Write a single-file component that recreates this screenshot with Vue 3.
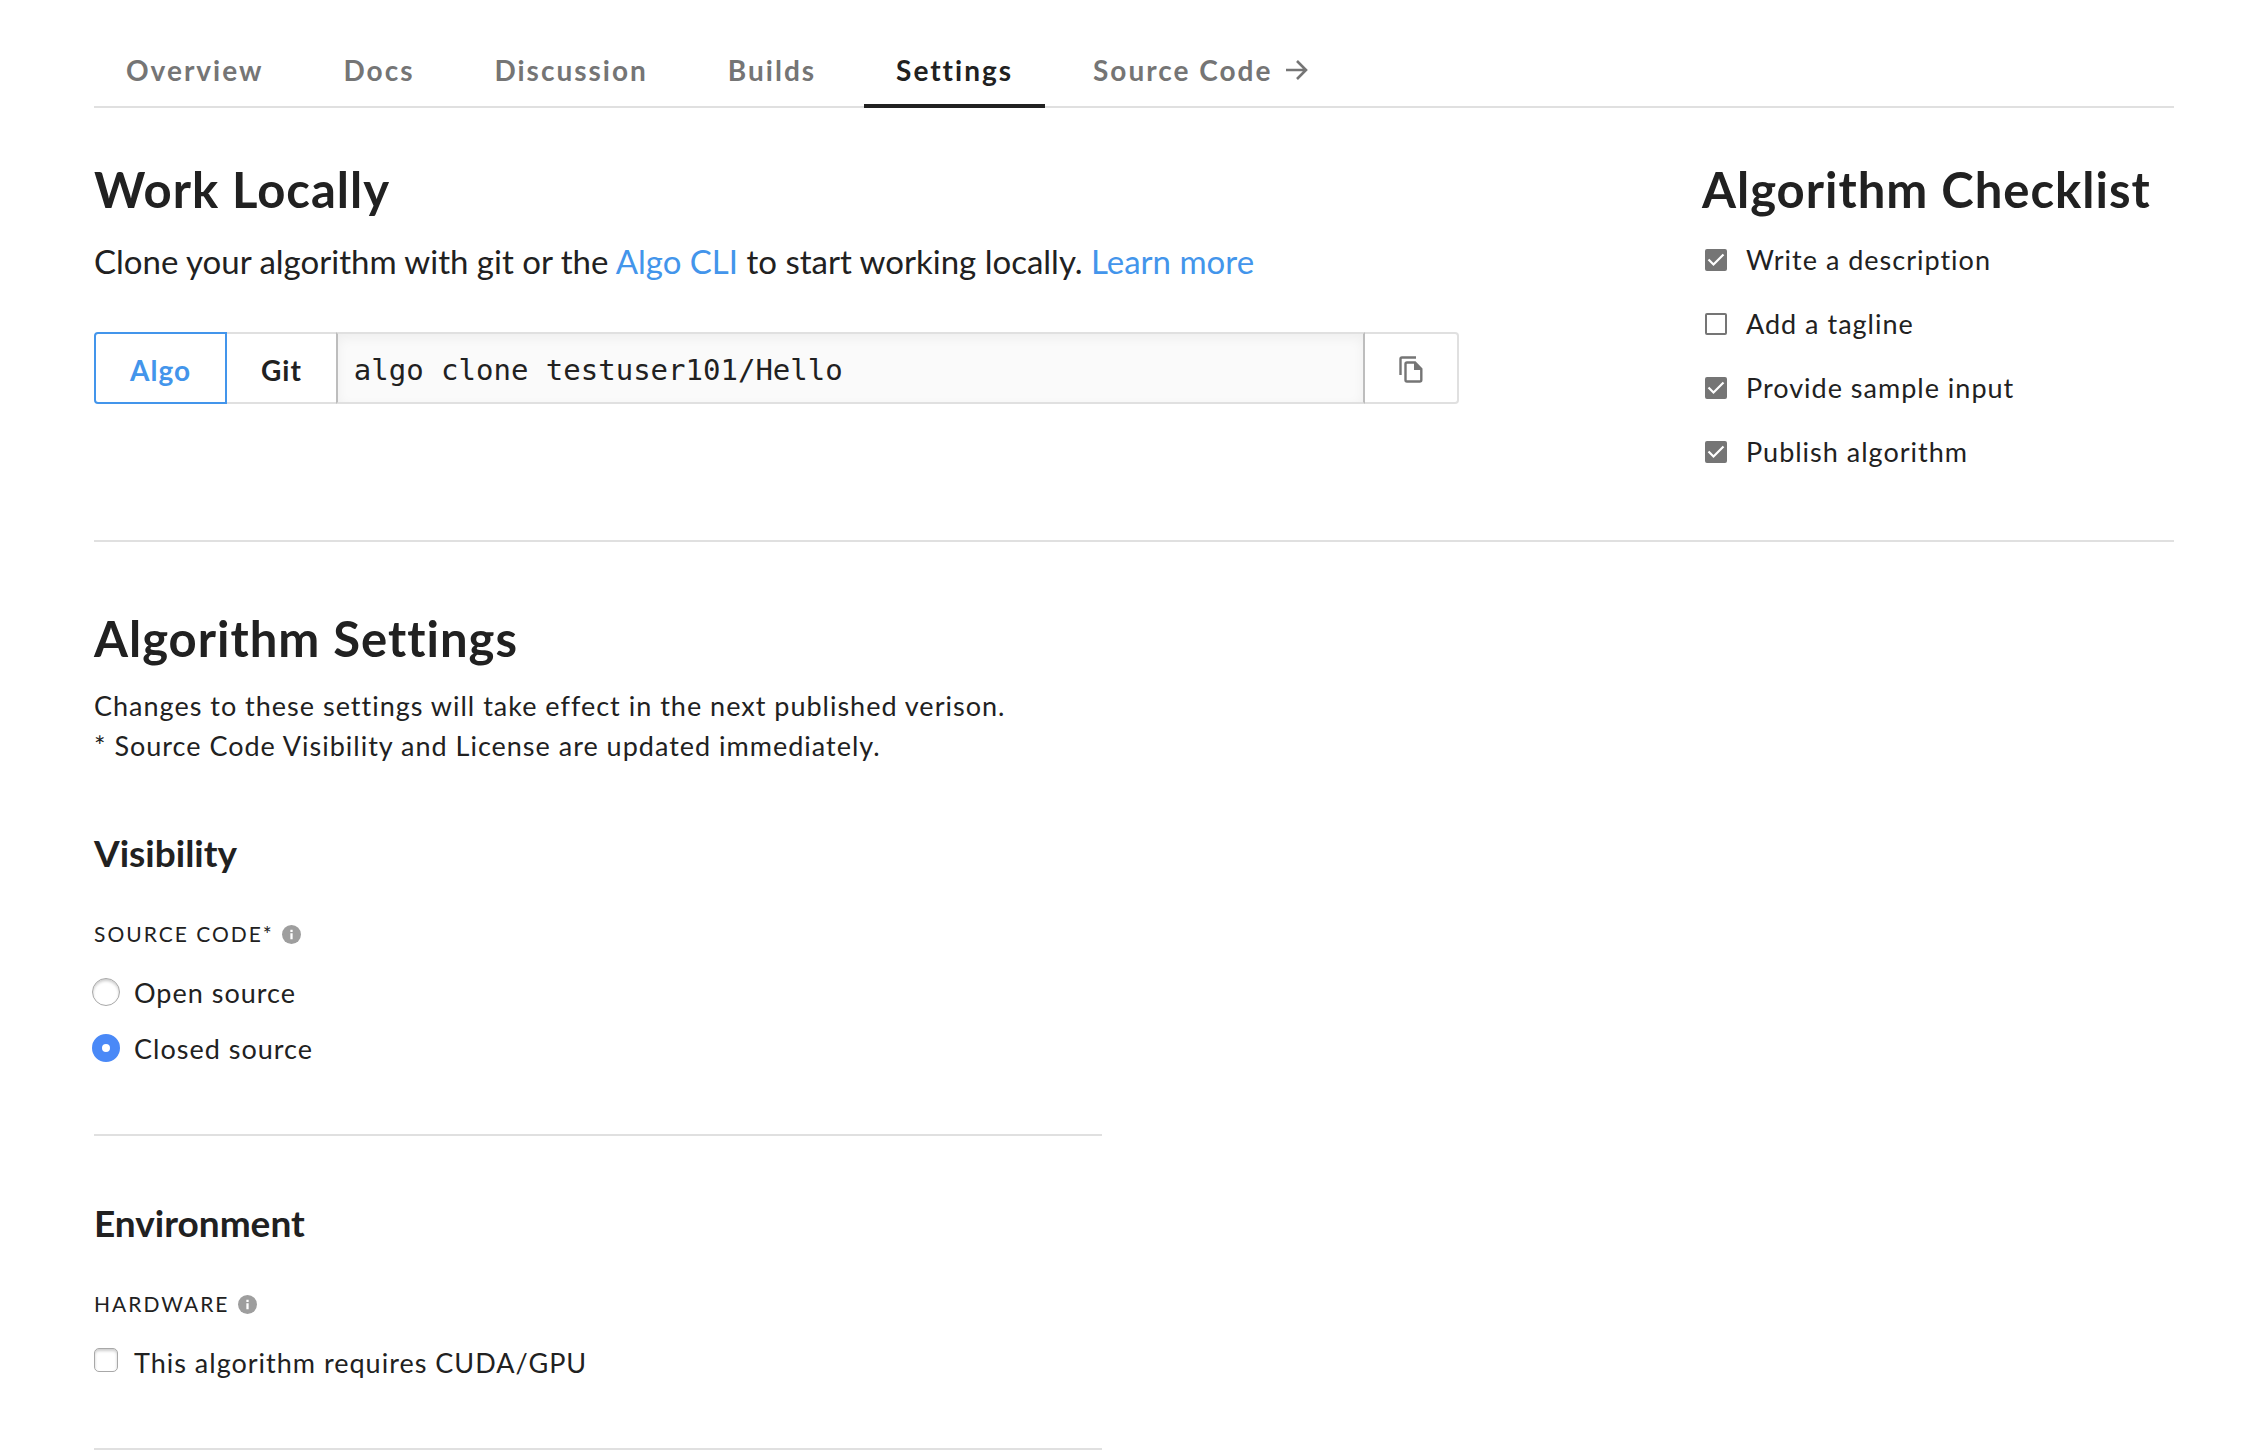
<script setup>
import { ref } from 'vue'

const tabs = ['Overview', 'Docs', 'Discussion', 'Builds', 'Settings']
const activeTab = ref('Settings')

const commands = {
  Algo: 'algo clone testuser101/Hello',
  Git: 'git clone https://git.algorithmia.com/git/testuser101/Hello.git',
}
const tool = ref('Algo')

const checklist = ref([
  { id: 'description', label: 'Write a description', done: true },
  { id: 'tagline', label: 'Add a tagline', done: false },
  { id: 'sample', label: 'Provide sample input', done: true },
  { id: 'publish', label: 'Publish algorithm', done: true },
])

const source = ref('closed')
const gpu = ref(false)
</script>

<template>
  <div class="page">
    <nav class="tabs">
      <a
        v-for="tab in tabs"
        :key="tab"
        href="#"
        class="tab"
        :class="{ active: tab === activeTab }"
        @click.prevent="activeTab = tab"
      >{{ tab }}</a>
      <a href="#" class="tab">
        Source Code
        <svg class="arrow" viewBox="0 0 22 22" aria-hidden="true">
          <path d="M0 11H20M11 2L20 11L11 20" fill="none" stroke="currentColor" stroke-width="2.6" />
        </svg>
      </a>
    </nav>

    <div class="grid intro">
      <section class="local">
        <h2>Work Locally</h2>
        <p class="lead">
          Clone your algorithm with git or the <a href="#">Algo CLI</a> to start working locally.
          <a href="#">Learn more</a>
        </p>
        <div class="clone">
          <button
            v-for="(cmd, name) in commands"
            :key="name"
            type="button"
            class="tool"
            :class="{ selected: tool === name }"
            @click="tool = name"
          >{{ name }}</button>
          <input class="command" type="text" readonly aria-label="Clone command" :value="commands[tool]" />
          <button type="button" class="copy" aria-label="Copy">
            <svg viewBox="0 0 24 28" aria-hidden="true">
              <path d="M1.500 19V3Q1.500 1.500 3 1.500H17" fill="none" stroke="currentColor" stroke-width="2.400" />
              <path d="M8 6.500H16L22.300 13V24Q22.300 25.500 20.800 25.500H8Q6.500 25.500 6.500 24V8Q6.500 6.500 8 6.500Z" fill="none" stroke="currentColor" stroke-width="2.400" />
              <path d="M15 6V14H23Z" fill="currentColor" />
            </svg>
          </button>
        </div>
      </section>

      <section class="checklist">
        <h2>Algorithm Checklist</h2>
        <ul>
          <li v-for="item in checklist" :key="item.id">
            <label class="check-row" :for="item.id">
              <span class="tick">
                <input :id="item.id" v-model="item.done" type="checkbox" />
                <svg v-if="item.done" viewBox="0 0 22 22" aria-hidden="true">
                  <path d="M3.500 10.500L8.500 15.500L18.500 5.500" fill="none" stroke="#fff" stroke-width="2.200" />
                </svg>
              </span>
              {{ item.label }}
            </label>
          </li>
        </ul>
      </section>
    </div>

    <div class="grid">
      <form class="settings" @submit.prevent>
        <h2>Algorithm Settings</h2>
        <p class="note">
          Changes to these settings will take effect in the next published verison.<br />
          * Source Code Visibility and License are updated immediately.
        </p>

        <section class="group">
          <h3>Visibility</h3>
          <div class="caption">
            SOURCE CODE*
            <svg class="info" viewBox="0 0 20 20" aria-hidden="true">
              <circle cx="10" cy="10" r="10" fill="#9e9e9e" />
              <path d="M8.800 5H11.200V7.300H8.800ZM8.800 8.800H11.200V15H8.800Z" fill="#fff" />
            </svg>
          </div>
          <div class="options">
            <label class="option" for="open-source">
              <input id="open-source" v-model="source" class="radio" type="radio" name="source" value="open" />
              Open source
            </label>
            <label class="option" for="closed-source">
              <input id="closed-source" v-model="source" class="radio" type="radio" name="source" value="closed" />
              Closed source
            </label>
          </div>
        </section>

        <section class="group">
          <h3>Environment</h3>
          <div class="caption">
            HARDWARE
            <svg class="info" viewBox="0 0 20 20" aria-hidden="true">
              <circle cx="10" cy="10" r="10" fill="#9e9e9e" />
              <path d="M8.800 5H11.200V7.300H8.800ZM8.800 8.800H11.200V15H8.800Z" fill="#fff" />
            </svg>
          </div>
          <div class="options">
            <label class="option" for="gpu">
              <input id="gpu" v-model="gpu" class="box" type="checkbox" />
              This algorithm requires CUDA/GPU
            </label>
          </div>
        </section>
      </form>
    </div>
  </div>
</template>

<style>
body {
  margin: 0;
  background: #fff;
}
</style>

<style scoped>
.page {
  padding: 50px 88px 4px 94px;
  color: #212121;
  font-family: Lato, "Open Sans", sans-serif;
  font-size: 27px;
  line-height: 40px;
  letter-spacing: 1px;
}

a {
  color: #4395eb;
  text-decoration: none;
}

h2,
h3,
p,
ul {
  margin: 0;
  padding: 0;
}

h2 {
  font-size: 49px;
  line-height: 64px;
  font-weight: 700;
}

h3 {
  font-size: 37px;
  line-height: 48px;
  font-weight: 700;
  letter-spacing: 0;
}

.tabs {
  display: flex;
  gap: 16px;
  height: 56px;
  border-bottom: 2px solid #e0e0e0;
}

.tab {
  display: flex;
  align-items: flex-start;
  gap: 14px;
  height: 54px;
  padding: 0 32px;
  border-bottom: 4px solid transparent;
  color: #757575;
  font-size: 28px;
  font-weight: 700;
  letter-spacing: 2px;
}

.tab.active {
  color: #212121;
  border-bottom-color: #212121;
}

.arrow {
  width: 22px;
  height: 22px;
  margin-top: 9px;
}

.grid {
  display: grid;
  grid-template-columns: repeat(12, minmax(0, 1fr));
  column-gap: 64px;
}

.intro {
  padding: 49px 0 68px;
  margin-bottom: 64px;
  border-bottom: 2px solid #e0e0e0;
}

.local {
  grid-column: span 8;
}

.lead {
  margin: 16px 0 47px;
  font-size: 33px;
  line-height: 48px;
  letter-spacing: 0;
}

.clone {
  display: flex;
  height: 72px;
}

.clone button,
.command {
  box-sizing: border-box;
  margin: 0;
  border: 2px solid #e0e0e0;
  background: #fff;
  color: #212121;
  font: inherit;
  font-size: 28px;
}

.clone .tool {
  padding: 4px 34px 0;
  border-width: 2px 0;
  font-weight: 700;
  letter-spacing: 1px;
}

.clone .tool.selected {
  border: 2px solid #4395eb;
  border-radius: 4px 0 0 4px;
  color: #4395eb;
}

.clone .command {
  flex: 1;
  min-width: 0;
  padding: 4px 16px 0;
  border-color: #e0e0e0 #bdbdbd;
  background: #fafafa;
  box-shadow: inset 0 4px 12px rgba(0, 0, 0, 0.05);
  font-family: "DejaVu Sans Mono", monospace;
  font-size: 29px;
}

.clone .copy {
  width: 94px;
  padding: 4px 0 0;
  border-left: 0;
  border-radius: 0 4px 4px 0;
  color: #757575;
}

.copy svg {
  display: block;
  width: 24px;
  height: 28px;
  margin: 0 auto;
}

.checklist {
  grid-column: 10 / span 3;
  white-space: nowrap;
}

.checklist ul {
  display: grid;
  gap: 24px;
  margin-top: 19px;
  list-style: none;
}

.check-row {
  display: flex;
  align-items: center;
  gap: 19px;
  padding-left: 3px;
}

.tick {
  display: grid;
  width: 22px;
  height: 22px;
}

.tick input {
  grid-area: 1 / 1;
  appearance: none;
  box-sizing: border-box;
  width: 22px;
  height: 22px;
  margin: 0;
  border: 2px solid #757575;
  border-radius: 2px;
}

.tick input:checked {
  background: #757575;
}

.tick svg {
  grid-area: 1 / 1;
  z-index: 1;
  pointer-events: none;
}

.settings {
  grid-column: span 6;
}

.note {
  margin-top: 16px;
}

.group {
  padding: 63px 0 65px;
  border-bottom: 2px solid #e0e0e0;
}

.caption {
  display: flex;
  align-items: center;
  gap: 8px;
  margin: 41px 0 23px;
  font-size: 21px;
  line-height: 32px;
  letter-spacing: 2px;
}

.info {
  width: 19px;
  height: 19px;
}

.options {
  display: grid;
  gap: 16px;
}

.option {
  display: flex;
  align-items: flex-start;
}

.radio,
.box {
  appearance: none;
  box-sizing: border-box;
  flex: none;
  border: 1px solid #a8a8a8;
  background: #fff;
  box-shadow: inset 0 2px 3px rgba(0, 0, 0, 0.2);
}

.radio {
  width: 28px;
  height: 28px;
  margin: 5px 14px 0 -2px;
  border-radius: 50%;
}

.radio:checked {
  border: 10px solid #4a89f7;
  box-shadow: none;
}

.box {
  width: 24px;
  height: 24px;
  margin: 5px 16px 0 0;
  border-radius: 5px;
}

.box:checked {
  background: #4a89f7;
}
</style>
